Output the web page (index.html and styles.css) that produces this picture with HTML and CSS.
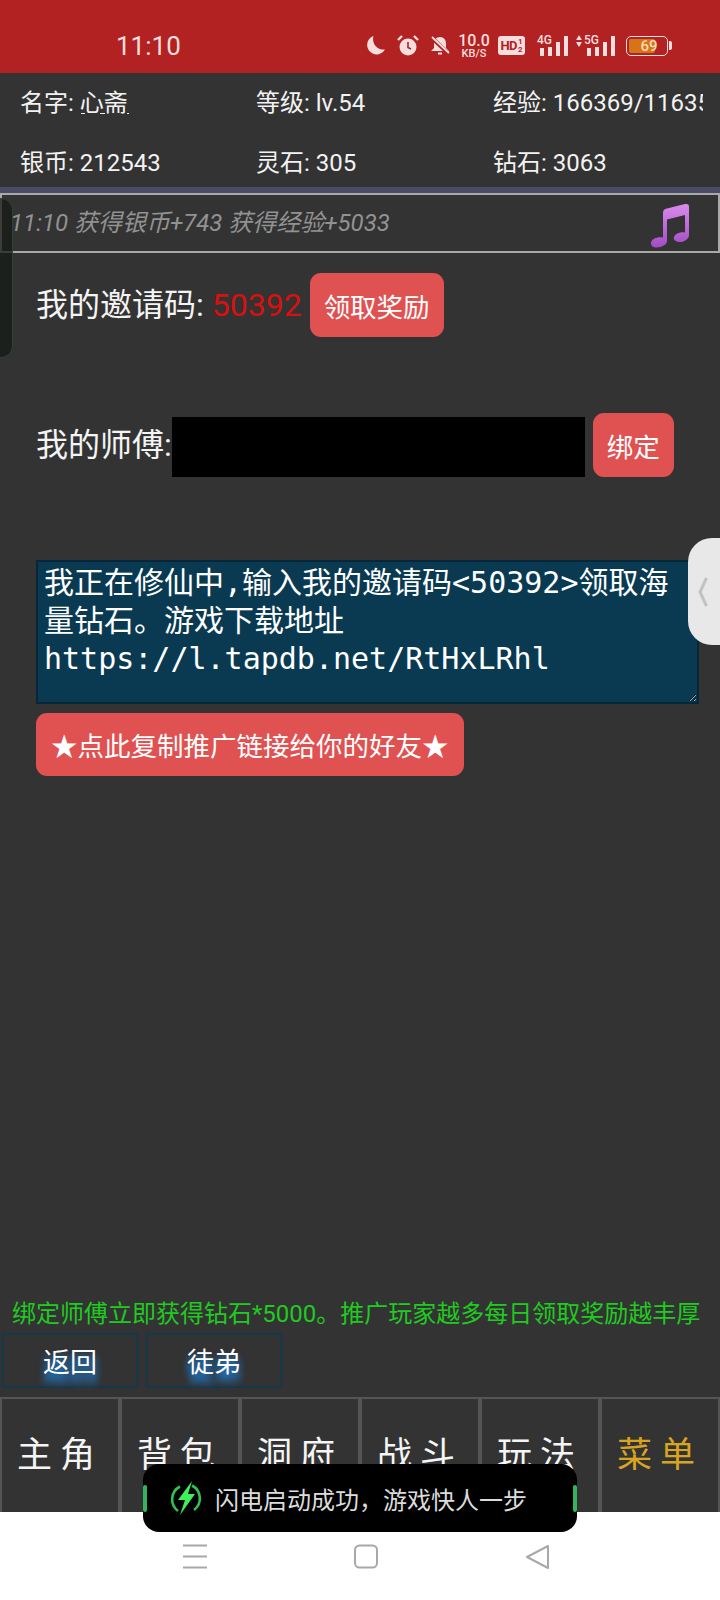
FILE: index.html
```html
<!DOCTYPE html>
<html>
<head>
    <title>推广</title>
    <link rel="stylesheet" href="styles.css">
</head>
<body>
    <div class="screen">
        <!-- Barra de estado -->
        <div class="status">
            <span class="clock">11:10</span>
            <div class="status-icons">
                <svg class="ico moon" width="20" height="19" viewBox="0 0 20 19"><path d="M8.500 0A9.500 9.500 0 1 0 20 13.500 10.500 10.500 0 0 1 8.500 0z" fill="#f6dede"/></svg>
                <svg class="ico alarm" width="22" height="21" viewBox="0 0 22 21"><circle cx="11" cy="12" r="8.500" fill="#f6dede"/><path d="M1 5l4-4M21 5l-4-4" stroke="#f6dede" stroke-width="2.400"/><path d="M11 7v5.500l3 1.500" stroke="#b22222" stroke-width="1.600" fill="none"/></svg>
                <svg class="ico bell" width="22" height="19" viewBox="0 0 22 19"><path d="M11 1c-4 0-6 3-6 7v4l-3 3h18l-3-3V8c0-4-2-7-6-7z" fill="#f6dede"/><path d="M9 16.500h4v2H9z" fill="#f6dede"/><path d="M2 1l18 17" stroke="#b22222" stroke-width="4"/><path d="M3 1l17 16" stroke="#f6dede" stroke-width="1.800"/></svg>
                <div class="speed"><span class="speed-num">10.0</span><span class="speed-unit">KB/S</span></div>
                <div class="hd"><span class="hd-text">HD</span><span class="hd-frac">1<br>2</span></div>
                <div class="signal">
                    <span class="net">4G</span>
                    <div class="bars"><i class="b1"></i><i class="b2"></i><i class="b3"></i><i class="b4"></i></div>
                </div>
                <div class="signal second">
                    <span class="updown">&#9650;<br>&#9660;</span>
                    <span class="net">5G</span>
                    <div class="bars"><i class="b1"></i><i class="b2"></i><i class="b3"></i><i class="b4"></i></div>
                </div>
                <div class="battery"><div class="battery-fill"></div><span class="battery-num">69</span></div>
            </div>
        </div>

        <!-- Datos del jugador -->
        <div class="stats">
            <div class="stat">名字: <span class="name">心斋</span></div>
            <div class="stat">等级: lv.54</div>
            <div class="stat">经验: 166369/11635</div>
            <div class="stat">银币: 212543</div>
            <div class="stat">灵石: 305</div>
            <div class="stat">钻石: 3063</div>
        </div>

        <div class="log">
            <span class="log-text">11:10 获得银币+743 获得经验+5033</span>
            <svg class="note" width="42" height="46" viewBox="0 0 42 46">
                <defs>
                    <linearGradient id="noteGrad" x1="0" y1="0" x2="0" y2="1">
                        <stop offset="0" stop-color="#d98bec"/>
                        <stop offset="1" stop-color="#a24cc4"/>
                    </linearGradient>
                </defs>
                <path d="M13 11c0-3 1-4 4-4.600L35 2c3-.5 4 .5 4 3v28c0 4-5 7.500-10 7-4-.5-6-2.500-5-5 1-3 6-5.500 11-4.500V13L17 17.500V39c0 3.500-5 6.500-10 6.500-4 0-6.500-2-6-5 .8-3.500 6-6 12-5z" fill="url(#noteGrad)"/>
            </svg>
        </div>

        <div class="content">
            <div class="row invite">
                <span class="label">我的邀请码: <span class="code">50392</span></span>
                <button class="btn">领取奖励</button>
            </div>

            <div class="row master">
                <label class="label" for="master">我的师傅:</label>
                <input class="master-input" id="master" type="text">
                <button class="btn">绑定</button>
            </div>

            <textarea class="share" readonly>我正在修仙中,输入我的邀请码&lt;50392&gt;领取海量钻石。游戏下载地址
https://l.tapdb.net/RtHxLRhl</textarea>
            <button class="btn copy">★点此复制推广链接给你的好友★</button>

            <div class="hint">绑定师傅立即获得钻石*5000。推广玩家越多每日领取奖励越丰厚</div>
            <div class="tabs">
                <div class="tab"><span>返回</span></div>
                <div class="tab"><span>徒弟</span></div>
            </div>
        </div>

        <!-- Menu inferior -->
        <div class="menu">
            <div class="menu-item">主角</div>
            <div class="menu-item">背包</div>
            <div class="menu-item">洞府</div>
            <div class="menu-item">战斗</div>
            <div class="menu-item">玩法</div>
            <div class="menu-item gold">菜单</div>
        </div>

        <div class="navbar">
            <svg width="26" height="25" viewBox="0 0 26 25"><path d="M1 1.500h24M1 12.500h24M1 23.500h24" stroke="#a8a8a8" stroke-width="2"/></svg>
            <svg width="26" height="25" viewBox="0 0 26 25"><rect x="2" y="1.500" width="22" height="22" rx="4.500" fill="none" stroke="#a8a8a8" stroke-width="2"/></svg>
            <svg width="26" height="26" viewBox="0 0 26 26"><path d="M24 2v22L3 13z" fill="none" stroke="#a8a8a8" stroke-width="2" stroke-linejoin="round"/></svg>
        </div>

        <!-- Elementos flotantes -->
        <div class="side-left"></div>
        <div class="side-right">
            <svg width="10" height="30" viewBox="0 0 10 30"><path d="M8.500 1L2 15l6.500 14" fill="none" stroke="#c2c2c2" stroke-width="3"/></svg>
        </div>
        <div class="toast">
            <svg class="bolt" width="32" height="34" viewBox="0 0 32 34">
                <path d="M10 5.500A14.500 14.500 0 0 0 8 30M22 4.500A14.500 14.500 0 0 1 24 29" fill="none" stroke="#2fc153" stroke-width="2.600"/>
                <path d="M22 0L8 19h7l-5 15 15-21h-7z" fill="#3df05a"/>
            </svg>
            <span class="toast-text">闪电启动成功，游戏快人一步</span>
        </div>
    </div>
</body>
</html>
```

FILE: styles.css
```css
/* Estilos de la pantalla */
* {
    box-sizing: border-box;
}

body {
    margin: 0;
    padding: 0;
    font-family: Roboto, "Noto Sans CJK SC", sans-serif;
    background-color: #333333;
}

.screen {
    position: relative;
    display: flex;
    flex-direction: column;
    width: 720px;
    height: 1600px;
    overflow: hidden;
    color: #ffffff;
    background-color: #333333;
}

/* Barra de estado */
.status {
    display: flex;
    align-items: center;
    flex: none;
    height: 73px;
    padding: 18px 0 0 116px;
    background-color: #b22222;
    color: #f6dede;
}

.clock {
    width: 249px;
    font-size: 26px;
}

.status-icons {
    display: flex;
    align-items: center;
}

.ico {
    display: block;
    flex: none;
}

.alarm {
    margin-left: 12px;
}

.bell {
    margin-left: 10px;
}

.speed {
    display: flex;
    flex-direction: column;
    align-items: center;
    width: 32px;
    margin-left: 7px;
    line-height: 1;
}

.speed-num {
    font-size: 16px;
    font-weight: 500;
}

.speed-unit {
    margin-top: -1px;
    font-size: 11px;
    font-weight: 500;
}

.hd {
    display: flex;
    align-items: center;
    justify-content: center;
    width: 27px;
    height: 19px;
    margin-left: 8px;
    border-radius: 3px;
    background-color: #f6dede;
    color: #b22222;
    font-weight: 700;
}

.hd-text {
    font-size: 13px;
    letter-spacing: -0.5px;
}

.hd-frac {
    margin-left: 1px;
    font-size: 8px;
    line-height: 8px;
}

.signal {
    position: relative;
    display: flex;
    align-items: flex-end;
    height: 21px;
    margin-left: 12px;
}

.signal.second {
    margin-left: 8px;
}

.net {
    align-self: flex-start;
    margin-right: -12px;
    font-size: 12px;
    font-weight: 500;
    line-height: 10px;
}

.updown {
    align-self: flex-start;
    margin-right: 2px;
    font-size: 6px;
    line-height: 6px;
}

.bars {
    display: flex;
    align-items: flex-end;
    gap: 4px;
}

.bars i {
    display: block;
    width: 4px;
    background-color: #f6dede;
}

.bars .b1 {
    height: 8px;
}

.bars .b2 {
    height: 9px;
}

.bars .b3 {
    height: 14px;
}

.bars .b4 {
    height: 20px;
}

.battery {
    position: relative;
    display: flex;
    align-items: center;
    justify-content: center;
    width: 42px;
    height: 20px;
    margin-left: 11px;
    padding-left: 4px;
    border: 1.5px solid #f6dede;
    border-radius: 5px;
}

.battery::after {
    content: "";
    position: absolute;
    top: 4px;
    right: -5px;
    width: 3px;
    height: 9px;
    border-radius: 0 2px 2px 0;
    background-color: #f6dede;
}

.battery-fill {
    position: absolute;
    top: 2px;
    bottom: 2px;
    left: 2px;
    width: 26px;
    border-radius: 2px;
    background-color: #d8731a;
}

.battery-num {
    position: relative;
    font-size: 15px;
    font-weight: 500;
    color: #f8dcae;
}

/* Datos del jugador */
.stats {
    display: grid;
    grid-template-columns: 236px 237px 210px;
    grid-template-rows: 60px 54px;
    flex: none;
    height: 120px;
    padding-left: 20px;
    border-bottom: 6px solid #4b4b68;
}

.stat {
    overflow: hidden;
    font-size: 24px;
    line-height: 60px;
    white-space: nowrap;
    color: #f2f2f2;
}

.stat:nth-child(n+4) {
    height: 60px;
}

.name {
    position: relative;
}

/* Trazos sueltos bajo el nombre */
.name::after {
    content: "";
    position: absolute;
    left: 1px;
    bottom: 3px;
    width: 48px;
    height: 1px;
    background: linear-gradient(to right, #eeeeee 0 4px, transparent 4px 19px, #eeeeee 19px 24px, transparent 24px 46px, #eeeeee 46px 48px);
}

/* Registro */
.log {
    display: flex;
    align-items: center;
    justify-content: space-between;
    flex: none;
    height: 60px;
    padding: 0 26px 0 8px;
    border: 2px solid #a9a9a9;
}

.log-text {
    margin-bottom: 6px;
    font-size: 24px;
    font-style: italic;
    color: #929292;
}

.note {
    margin-top: 4px;
}

/* Contenido */
.content {
    display: flex;
    flex-direction: column;
    flex: 1;
    align-items: flex-start;
    padding: 20px 0 9px;
}

.row {
    display: flex;
    margin-left: 36px;
}

.label {
    margin-bottom: 7px;
    font-size: 32px;
    color: #f4f4f4;
}

.code {
    color: #d81010;
}

.invite {
    align-items: center;
    gap: 8px;
}

.btn {
    height: 64px;
    padding: 0 14px;
    border: 0;
    border-radius: 11px;
    font-family: Roboto, "Noto Sans CJK SC", sans-serif;
    font-size: 26.500px;
    color: #ffffff;
    background-color: #e05252;
}

.master {
    align-items: center;
    margin-top: 76px;
}

.master-input {
    align-self: flex-end;
    width: 413px;
    height: 60px;
    border: 0;
    background-color: #000000;
}

.master .btn {
    margin-left: 8px;
}

.share {
    display: block;
    width: 663px;
    height: 144px;
    margin: 83px 0 0 36px;
    padding: 2px 6px;
    border: 2px solid #06263a;
    border-radius: 0;
    font-family: "DejaVu Sans Mono", "Noto Sans CJK SC", monospace;
    font-size: 30px;
    line-height: 38px;
    color: #ffffff;
    background-color: #0a3a52;
}

.copy {
    height: 63px;
    margin: 9px 0 0 36px;
    padding: 0 15px;
}

.hint {
    margin-top: auto;
    padding-left: 12px;
    font-size: 24px;
    line-height: 38px;
    white-space: nowrap;
    color: #1fcb1f;
}

.tabs {
    display: flex;
    gap: 8px;
    padding-left: 2px;
}

.tab {
    display: flex;
    align-items: center;
    justify-content: center;
    width: 136px;
    height: 55px;
    border: 2px solid #15384a;
    font-size: 27px;
    color: #ffffff;
    text-shadow: 0 7px 7px #1f78c8, 0 8px 8px #1f78c8;
}

/* Menu inferior */
.menu {
    display: flex;
    flex: none;
    height: 115px;
}

.menu-item {
    width: 120px;
    padding-top: 33px;
    border: 2px solid #555555;
    border-bottom: 0;
    font-size: 35px;
    line-height: 48px;
    letter-spacing: 8px;
    text-align: center;
    color: #f5f5f5;
}

.gold {
    color: #d9a521;
}

.navbar {
    display: flex;
    align-items: flex-start;
    flex: none;
    height: 88px;
    padding: 32px 170px 0 182px;
    justify-content: space-between;
    background-color: #ffffff;
}

/* Elementos flotantes */
.side-left {
    position: absolute;
    top: 198px;
    left: -2px;
    width: 15px;
    height: 160px;
    border: 1px solid #2e4235;
    border-radius: 0 12px 12px 0;
    background-color: rgba(22, 26, 22, 0.75);
}

.side-right {
    position: absolute;
    top: 538px;
    right: 0;
    display: flex;
    align-items: center;
    width: 32px;
    height: 107px;
    padding-left: 10px;
    border-radius: 24px 0 0 24px;
    background-color: #e8e8e8;
}

.toast {
    position: absolute;
    top: 1464px;
    left: 143px;
    display: flex;
    align-items: center;
    width: 434px;
    height: 68px;
    padding: 0 0 0 27px;
    border-radius: 16px;
    background-color: #000000;
}

.toast::before,
.toast::after {
    content: "";
    position: absolute;
    top: 21px;
    width: 4px;
    height: 27px;
    border-radius: 2px;
    background-color: #35b460;
}

.toast::before {
    left: 0;
}

.toast::after {
    right: 0;
}

.toast-text {
    margin-left: 13px;
    font-size: 24px;
    color: #dcdcdc;
}
```
